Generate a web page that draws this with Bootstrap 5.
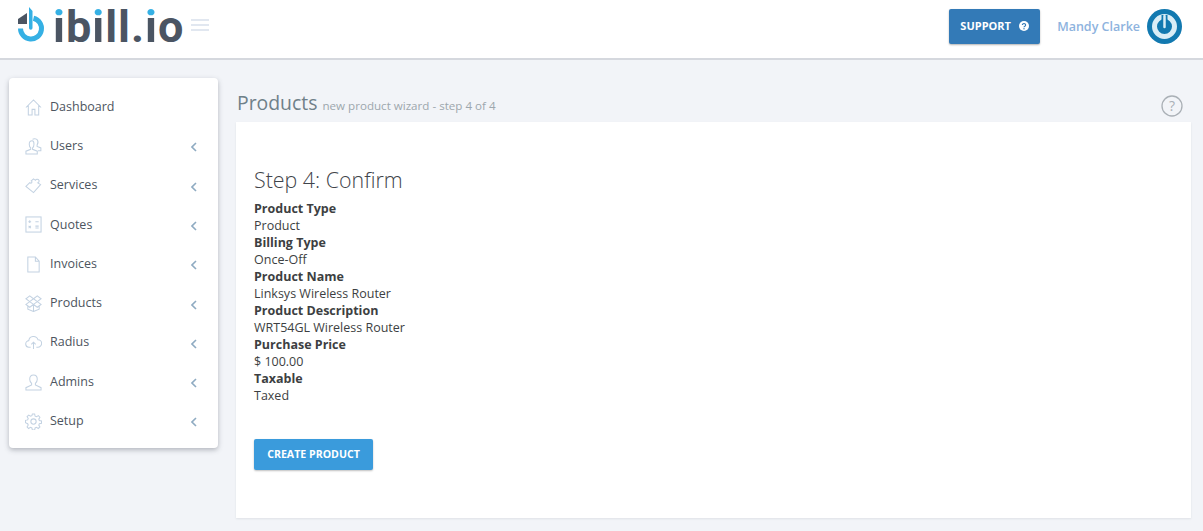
<!DOCTYPE html>
<html lang="en">
<head>
<meta charset="UTF-8">
<meta name="viewport" content="width=device-width, initial-scale=1.0">
<link href="https://cdn.jsdelivr.net/npm/bootstrap@5.3.3/dist/css/bootstrap.min.css" rel="stylesheet">
<style>
body { background: #f2f4f8; font-family: "Open Sans", sans-serif; font-size: 12.5px; color: #3d3f42; height: 531px; overflow: hidden; }
.topbar { height: 60px; background: #fff; border-bottom: 2px solid #d5d8de; padding: 0 21px 0 17px; }
.logo-mark { width: 28px; height: 36px; margin-top: 7px; align-self: flex-start; }
.brand { font-family: Roboto, sans-serif; font-size: 45px; font-weight: 700; line-height: 53px; letter-spacing: 1px; color: #4b5563; align-self: flex-start; margin-left: 8px; }
.brand-i { background: linear-gradient(170deg, #35b0e4 30%, #4b5563 31%); -webkit-background-clip: text; background-clip: text; color: transparent; }
.burger { width: 18px; margin-left: 7px; margin-top: -5px; }
.burger span { display: block; height: 2px; background: #e1e7f0; margin-bottom: 3px; }
.top-right { margin-top: -6px; }
.btn-support { background: #337ab7; color: #fff; font-size: 11px; font-weight: 700; border-radius: 2px; width: 91px; height: 35px; padding: 0; box-shadow: 0 1px 2px rgba(0,0,0,.3); border: 0; }
.btn-support:hover { background: #337ab7; color: #fff; }
.user-name { color: #8eb3de; font-size: 12.5px; font-weight: 600; margin-left: 17px; margin-right: 7px; padding-top: 2px; }
.layout { padding: 18px 12px 0 9px; gap: 18px; }
.side-menu { width: 209px; height: 370px; background: #fff; border-radius: 4px; box-shadow: 0 2px 5px rgba(60,65,80,.35); padding: 9.4px 0 0 16px; flex-shrink: 0; }
.menu-row { height: 39.3px; color: #4d5560; font-size: 12.5px; padding-right: 21px; }
.menu-row svg.ico { width: 17px; height: 17px; margin-right: 8px; flex-shrink: 0; fill: none; stroke: #c3d2e2; stroke-width: 1.1; }
.menu-row svg.chev { width: 6px; height: 10px; margin-left: auto; margin-top: 2px; fill: none; stroke: #8fabc2; stroke-width: 1.6; }
.main-col { flex: 1; }
.page-head { height: 44px; padding: 12px 0 0 1px; color: #6f8089; }
.page-title { font-size: 19.4px; line-height: 26px; }
.page-sub { font-size: 11.6px; color: #9da7ad; margin-left: 5px; }
.help-ico { margin-right: 8px; }
.wizard-box { background: #fff; height: 396px; padding: 44px 18px 0; box-shadow: 0 1px 2px rgba(60,65,80,.1); }
.wizard-box h4 { font-size: 21.4px; font-weight: 300; line-height: 28px; margin: 0 0 6px; color: #3f444a; }
.detail-line { line-height: 17px; }
.btn-create { background: #3a9bdc; color: #fff; font-size: 10.6px; font-weight: 700; border: 0; border-radius: 2px; width: 119px; height: 31px; padding: 0; margin-top: 35px; box-shadow: 0 1px 2px rgba(0,0,0,.25); }
.btn-create:hover { background: #3a9bdc; color: #fff; }
</style>
<title>Products</title>
</head>
<body>
<nav class="topbar d-flex align-items-center">
  <svg class="logo-mark" viewBox="0 0 28 36">
    <path d="M16.500 11.300A10.500 10.500 0 1 1 3.500 21.500" fill="none" stroke="#35b0e4" stroke-width="5"/>
    <path d="M12 0l3.500 4V21a1.750 1.750 0 0 1-3.500 0z" fill="#35b0e4"/>
    <path d="M1 12l9-6v11H1z" fill="#4b5563"/>
  </svg>
  <div class="brand"><span class="brand-i">i</span>b<span class="brand-i">i</span>ll.<span class="brand-i">i</span>o</div>
  <div class="burger"><span></span><span></span><span></span></div>
  <div class="ms-auto d-flex align-items-center top-right">
    <button class="btn btn-support d-flex align-items-center justify-content-center gap-2">SUPPORT
      <svg width="10" height="10" viewBox="0 0 10 10"><circle cx="5" cy="5" r="5" fill="#fff"/><path d="M3.400 4a1.600 1.500 0 1 1 2.400 1.300c-.6.3-.8.5-.8 1" fill="none" stroke="#337ab7" stroke-width="1.200"/><circle cx="5" cy="7.800" r=".7" fill="#337ab7"/></svg>
    </button>
    <span class="user-name">Mandy Clarke</span>
    <svg width="35" height="35" viewBox="0 0 35 35">
      <circle cx="17.500" cy="17.500" r="17.500" fill="#1279b0"/>
      <circle cx="17.500" cy="17.500" r="10" fill="none" stroke="#d9edf6" stroke-width="5"/>
      <path d="M17.500 6v12" stroke="#1279b0" stroke-width="6"/>
      <path d="M17.500 7v11" stroke="#d9edf6" stroke-width="2.500" stroke-linecap="round"/>
    </svg>
  </div>
</nav>
<div class="layout d-flex">
  <aside class="side-menu">
    <div class="menu-row d-flex align-items-center"><svg class="ico" viewBox="0 0 18 18"><path d="M1 9l8-8 8 8M3.500 7v10h4v-6h3v6h4V7"/></svg>Dashboard</div>
    <div class="menu-row d-flex align-items-center"><svg class="ico" viewBox="0 0 18 18"><path d="M8 1.500c1-1 4-1 5 .5 1 1.500.8 4-.2 5.500v1.500l4 1.500v3h-3M7.500 3C5.500 3 4.500 4.500 4.500 6.500c0 1.500.5 3 1.500 4v1.500L1 14v3h12v-3l-5-2v-1.500c1-1 1.500-2.500 1.500-4C9.500 4.500 9 3 7.500 3z"/></svg>Users<svg class="chev" viewBox="0 0 6 10"><path d="M5 1L1 5l4 4"/></svg></div>
    <div class="menu-row d-flex align-items-center"><svg class="ico" viewBox="0 0 18 18"><path d="M1 10l4-4c1.200 1 2.500.3 2.300-1C7.200 4.200 6.700 4 6.700 4L9 2l2 1.500c.7-1.500 3-1.500 3.700-.2.700 1.200-.1 2.400-1.200 2.900L16.500 8 9 16.500z"/></svg>Services<svg class="chev" viewBox="0 0 6 10"><path d="M5 1L1 5l4 4"/></svg></div>
    <div class="menu-row d-flex align-items-center"><svg class="ico" viewBox="0 0 18 18"><rect x="1" y="1" width="16" height="16"/><path d="M3.500 6h3M5 4.500v3M11 6h3.500M3.800 10.500l2.400 2.400M6.200 10.500l-2.400 2.400M11 10.700h3.500M11 12.800h3.500"/></svg>Quotes<svg class="chev" viewBox="0 0 6 10"><path d="M5 1L1 5l4 4"/></svg></div>
    <div class="menu-row d-flex align-items-center"><svg class="ico" viewBox="0 0 18 18"><path d="M3 1h8l4 4.500V17H3zM11 1v4.500h4"/></svg>Invoices<svg class="chev" viewBox="0 0 6 10"><path d="M5 1L1 5l4 4"/></svg></div>
    <div class="menu-row d-flex align-items-center"><svg class="ico" viewBox="0 0 18 18"><path d="M5 1L1 4l4 3 4-3zM13 1L9 4l4 3 4-3zM5 7L1 10l4 3 4-3zM13 7l-4 3 4 3 4-3zM3 12v3l6 2.500 6-2.500v-3M9 10v7.500"/></svg>Products<svg class="chev" viewBox="0 0 6 10"><path d="M5 1L1 5l4 4"/></svg></div>
    <div class="menu-row d-flex align-items-center"><svg class="ico" viewBox="0 0 18 18"><path d="M6 14H4.500A3.500 3.500 0 0 1 4 7a5 5 0 0 1 9.700-1A4 4 0 0 1 13.500 14H12M9 16V9M6.700 11L9 8.700l2.300 2.300"/></svg>Radius<svg class="chev" viewBox="0 0 6 10"><path d="M5 1L1 5l4 4"/></svg></div>
    <div class="menu-row d-flex align-items-center"><svg class="ico" viewBox="0 0 18 18"><path d="M9 1c-2.800 0-4 2-4 4.500 0 2 1 3.500 2 4.500v1.500l-6 3V17h16v-2.500l-6-3V10c1-1 2-2.500 2-4.500C13 3 11.800 1 9 1z"/></svg>Admins<svg class="chev" viewBox="0 0 6 10"><path d="M5 1L1 5l4 4"/></svg></div>
    <div class="menu-row d-flex align-items-center"><svg class="ico" viewBox="0 0 18 18"><circle cx="9" cy="9" r="2.800"/><path d="M7.800 1h2.400l.5 2.300 1.500.7 2-1.200 1.600 1.700-1.200 2 .6 1.400 2.300.5v2.400l-2.300.5-.6 1.500 1.200 2-1.700 1.600-2-1.200-1.400.6-.5 2.300H7.800l-.5-2.300-1.500-.6-2 1.200-1.600-1.700 1.200-2-.6-1.400L.5 10.200V7.800l2.300-.5.600-1.500-1.200-2L3.900 2.200l2 1.200 1.400-.6z"/></svg>Setup<svg class="chev" viewBox="0 0 6 10"><path d="M5 1L1 5l4 4"/></svg></div>
  </aside>
  <main class="main-col">
    <div class="page-head d-flex align-items-baseline">
      <span class="page-title">Products</span><span class="page-sub">new product wizard - step 4 of 4</span>
      <svg class="ms-auto align-self-center help-ico" width="22" height="22" viewBox="0 0 22 22"><circle cx="11" cy="11" r="10" fill="none" stroke="#aab0b6" stroke-width="1.300"/><text x="11" y="16" text-anchor="middle" font-family="Open Sans" font-size="14" fill="#aab0b6">?</text></svg>
    </div>
    <section class="wizard-box">
      <h4>Step 4: Confirm</h4>
      <div class="detail-line fw-bold">Product Type</div>
      <div class="detail-line">Product</div>
      <div class="detail-line fw-bold">Billing Type</div>
      <div class="detail-line">Once-Off</div>
      <div class="detail-line fw-bold">Product Name</div>
      <div class="detail-line">Linksys Wireless Router</div>
      <div class="detail-line fw-bold">Product Description</div>
      <div class="detail-line">WRT54GL Wireless Router</div>
      <div class="detail-line fw-bold">Purchase Price</div>
      <div class="detail-line">$ 100.00</div>
      <div class="detail-line fw-bold">Taxable</div>
      <div class="detail-line">Taxed</div>
      <button class="btn btn-create">CREATE PRODUCT</button>
    </section>
  </main>
</div>
</body>
</html>
